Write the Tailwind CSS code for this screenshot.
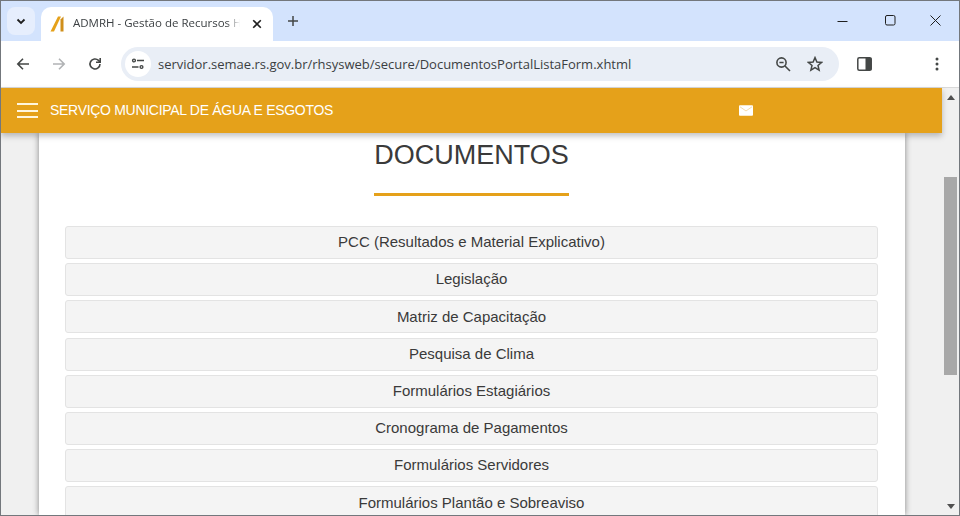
<!DOCTYPE html>
<html lang="en">
<head>
    <meta charset="UTF-8">
    <title>ADMRH - Gestão de Recursos Humanos</title>
    <script src="https://cdn.jsdelivr.net/npm/@tailwindcss/browser@4"></script>
</head>
<body class="overflow-hidden">
    <div class="w-[960px] h-[516px] flex flex-col overflow-hidden border border-[#73777c] font-['Liberation_Sans',sans-serif]">
        <!-- tab strip -->
        <div class="h-[40px] shrink-0 bg-[#d3e3fd] flex">
            <div class="w-[6px]"></div>
            <div class="mt-[6px] w-[28px] h-[28px] rounded-lg bg-[#e6eefd] flex items-center justify-center">
                <svg width="12" height="12" viewBox="0 0 12 12" fill="none" stroke="#1f1f1f" stroke-width="1.8"><path d="M2.5 4.5 6 8l3.5-3.5"/></svg>
            </div>
            <div class="ml-[6px] mt-[6px] w-[232px] h-[34px] bg-white rounded-t-[10px] flex items-center pl-[9px]">
                <svg width="14" height="16" viewBox="0 0 14 16"><path d="M0.5 15.5 8 0.5h3L4 15.5z" fill="#e5a11a"/><path d="M10.5 3.5 13.5 0.5v15h-3z" fill="#d08f1b"/></svg>
                <span class="ml-[9px] mb-[2px] w-[167px] overflow-hidden whitespace-nowrap text-[11.5px] text-[#3c4043] font-['Open_Sans',sans-serif] [mask-image:linear-gradient(to_right,black_92%,transparent)]">ADMRH - Gestão de Recursos Humanos</span>
                <svg class="ml-[12px]" width="10" height="10" viewBox="0 0 10 10" stroke="#1f1f1f" stroke-width="1.6"><path d="M1.2 1.2l7.6 7.6M8.8 1.2 1.2 8.8"/></svg>
            </div>
            <svg class="ml-[14px] mt-[14px]" width="12" height="12" viewBox="0 0 12 12" stroke="#444746" stroke-width="1.5"><path d="M6 1v10M1 6h10"/></svg>
            <div class="flex-1"></div>
            <div class="flex items-start">
                <svg class="mt-[15px] mr-[37px]" width="11" height="11" viewBox="0 0 11 11" stroke="#1f1f1f"><path d="M0.5 5.5h10"/></svg>
                <svg class="mt-[14px] mr-[34px]" width="11" height="11" viewBox="0 0 11 11" fill="none" stroke="#1f1f1f"><rect x=".5" y=".5" width="9.5" height="9.5" rx="1.5"/></svg>
                <svg class="mt-[14px] mr-[18px]" width="11" height="11" viewBox="0 0 11 11" stroke="#1f1f1f"><path d="M.5.5l10 10M10.5.5l-10 10"/></svg>
            </div>
        </div>
        <!-- toolbar -->
        <div class="h-[46px] shrink-0 bg-white rounded-t-lg flex items-center relative">
            <svg class="ml-[15px]" width="14" height="14" viewBox="0 0 14 14" fill="none" stroke="#444746" stroke-width="1.6"><path d="M13 7H2M7 1.8 1.8 7 7 12.2"/></svg>
            <svg class="ml-[22px]" width="14" height="14" viewBox="0 0 14 14" fill="none" stroke="#b1b3b5" stroke-width="1.6"><path d="M1 7h11M7 1.8 12.2 7 7 12.2"/></svg>
            <svg class="ml-[22px]" width="14" height="14" viewBox="0 0 14 14" fill="none" stroke="#444746" stroke-width="1.6"><path d="M12 7a5 5 0 1 1-1.5-3.6L12 5"/><path d="M12.2 1v4.2H8" /></svg>
            <div class="ml-[19px] w-[718px] h-[34px] rounded-full bg-[#e9eef6] flex items-center">
                <div class="ml-[4px] w-[26px] h-[26px] rounded-full bg-white flex items-center justify-center">
                    <svg width="14" height="12" viewBox="0 0 14 12" fill="none" stroke="#444746" stroke-width="1.4"><circle cx="3" cy="2.5" r="1.4"/><path d="M6 2.5h7M1 9h6.5"/><circle cx="10.5" cy="9" r="1.4"/></svg>
                </div>
                <span class="ml-[7px] mt-[1px] text-[13px] text-[#3b3e42] whitespace-nowrap font-['Open_Sans',sans-serif]">servidor.semae.rs.gov.br/rhsysweb/secure/DocumentosPortalListaForm.xhtml</span>
                <div class="flex-1"></div>
                <svg width="16" height="16" viewBox="0 0 16 16" fill="none" stroke="#444746" stroke-width="1.6"><circle cx="6.5" cy="6.5" r="4.6"/><path d="M4.4 6.5h4.2M10 10l5 5"/></svg>
                <svg class="ml-[16px] mr-[16px]" width="16" height="16" viewBox="0 0 16 16" fill="none" stroke="#444746" stroke-width="1.5"><path d="M8 1.6 9.9 6l4.7.4-3.6 3.1 1.1 4.6L8 11.7l-4.1 2.4L5 9.5 1.4 6.4 6.1 6z"/></svg>
            </div>
            <svg class="ml-[18px]" width="15" height="14" viewBox="0 0 15 14"><rect x=".8" y=".8" width="13.4" height="12.4" rx="1.5" fill="#fff" stroke="#444746" stroke-width="1.5"/><rect x="8.5" y="1" width="6" height="12" fill="#444746"/></svg>
            <svg class="ml-[63px]" width="4" height="14" viewBox="0 0 4 14" fill="#444746"><circle cx="2" cy="2" r="1.5"/><circle cx="2" cy="7" r="1.5"/><circle cx="2" cy="12" r="1.5"/></svg>
        </div>
        <!-- page -->
        <div class="flex-1 min-h-0 flex bg-[#f0f0f0] border-t border-[#d9d9d9]">
            <div class="w-[941px] shrink-0 flex flex-col relative">
                <header class="h-[45px] shrink-0 bg-[#e5a11a] shadow-[0_3px_6px_rgba(0,0,0,0.25)] flex items-center text-white relative z-10">
                    <div class="ml-[16px] w-[21px] flex flex-col gap-[4.5px]">
                        <div class="h-[2px] bg-[#fff6dd]"></div>
                        <div class="h-[2px] bg-[#fff6dd]"></div>
                        <div class="h-[2px] bg-[#fff6dd]"></div>
                    </div>
                    <span class="ml-[12px] w-[689px] text-[14px] tracking-[-0.3px] whitespace-nowrap">SERVIÇO MUNICIPAL DE ÁGUA E ESGOTOS</span>
                    <svg width="14" height="11" viewBox="0 0 15 11"><rect width="15" height="11" rx="1" fill="#fff"/><path d="M1 1.5 7.5 6 14 1.5" fill="none" stroke="#f2cf8c" stroke-width=".8"/></svg>
                </header>
                <main class="ml-[38px] w-[866px] flex-1 min-h-0 bg-white shadow-[0_0_6px_rgba(0,0,0,0.45)] flex flex-col overflow-hidden">
                    <h1 class="shrink-0 mt-[6px] pr-[1px] h-[32px] leading-[32px] text-center text-[27px] text-[#3a3a3a]">DOCUMENTOS</h1>
                    <div class="shrink-0 ml-[335px] mt-[22px] w-[195px] h-[3px] bg-[#e5a11a]"></div>
                    <div class="shrink-0 ml-[26px] mt-[30px] w-[813px] flex flex-col gap-[4.2px] text-[#3a3a3a]">
                        <div class="h-[33px] shrink-0 flex items-center justify-center rounded-[3px] border border-[#e3e3e3] bg-[#f4f4f4] text-[15px]">PCC (Resultados e Material Explicativo)</div>
                        <div class="h-[33px] shrink-0 flex items-center justify-center rounded-[3px] border border-[#e3e3e3] bg-[#f4f4f4] text-[15px]">Legislação</div>
                        <div class="h-[33px] shrink-0 flex items-center justify-center rounded-[3px] border border-[#e3e3e3] bg-[#f4f4f4] text-[15px]">Matriz de Capacitação</div>
                        <div class="h-[33px] shrink-0 flex items-center justify-center rounded-[3px] border border-[#e3e3e3] bg-[#f4f4f4] text-[15px]">Pesquisa de Clima</div>
                        <div class="h-[33px] shrink-0 flex items-center justify-center rounded-[3px] border border-[#e3e3e3] bg-[#f4f4f4] text-[15px]">Formulários Estagiários</div>
                        <div class="h-[33px] shrink-0 flex items-center justify-center rounded-[3px] border border-[#e3e3e3] bg-[#f4f4f4] text-[15px]">Cronograma de Pagamentos</div>
                        <div class="h-[33px] shrink-0 flex items-center justify-center rounded-[3px] border border-[#e3e3e3] bg-[#f4f4f4] text-[15px]">Formulários Servidores</div>
                        <div class="h-[33px] shrink-0 flex items-center justify-center rounded-[3px] border border-[#e3e3e3] bg-[#f4f4f4] text-[15px]">Formulários Plantão e Sobreaviso</div>
                    </div>
                </main>
            </div>
            <!-- scrollbar -->
            <div class="flex-1 flex flex-col items-center bg-[#f0f0f0]">
                <svg class="mt-[7px]" width="8" height="5" viewBox="0 0 8 5" fill="#505050"><path d="M4 0l4 5H0z"/></svg>
                <div class="mt-[77px] w-[13px] h-[198px] bg-[#a8a8a8]"></div>
                <div class="flex-1"></div>
                <svg class="mb-[6px]" width="8" height="5" viewBox="0 0 8 5" fill="#505050"><path d="M0 0h8L4 5z"/></svg>
            </div>
        </div>
    </div>
</body>
</html>
